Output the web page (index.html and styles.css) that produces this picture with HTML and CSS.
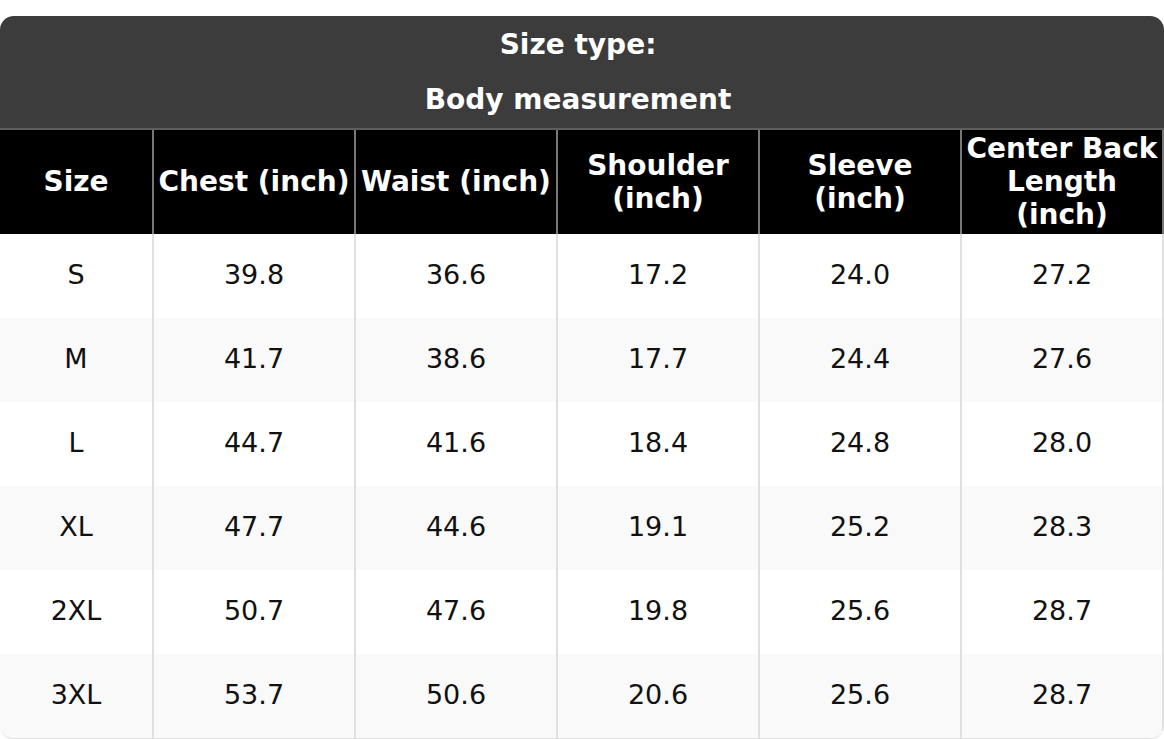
FILE: index.html
```html
<!DOCTYPE html>
<html lang="en">
<head>
<meta charset="utf-8">
<title>Size chart</title>
<link rel="stylesheet" href="styles.css">
</head>
<body>
<div class="chart">
  <table class="size-table">
    <colgroup>
      <col class="col-size">
      <col><col><col><col><col>
    </colgroup>
    <thead>
      <tr>
        <th class="type-head" colspan="6">
          <p class="type-line">Size type:</p>
          <p class="type-line">Body measurement</p>
        </th>
      </tr>
      <tr class="col-head">
        <th>Size</th>
        <th>Chest (inch)</th>
        <th>Waist (inch)</th>
        <th>Shoulder (inch)</th>
        <th>Sleeve (inch)</th>
        <th>Center Back Length (inch)</th>
      </tr>
    </thead>
    <tbody>
      <tr><td>S</td><td>39.8</td><td>36.6</td><td>17.2</td><td>24.0</td><td>27.2</td></tr>
      <tr><td>M</td><td>41.7</td><td>38.6</td><td>17.7</td><td>24.4</td><td>27.6</td></tr>
      <tr><td>L</td><td>44.7</td><td>41.6</td><td>18.4</td><td>24.8</td><td>28.0</td></tr>
      <tr><td>XL</td><td>47.7</td><td>44.6</td><td>19.1</td><td>25.2</td><td>28.3</td></tr>
      <tr><td>2XL</td><td>50.7</td><td>47.6</td><td>19.8</td><td>25.6</td><td>28.7</td></tr>
      <tr><td>3XL</td><td>53.7</td><td>50.6</td><td>20.6</td><td>25.6</td><td>28.7</td></tr>
    </tbody>
  </table>
</div>
</body>
</html>
```

FILE: styles.css
```css
html, body {
  margin: 0;
  padding: 0;
  background: #ffffff;
}

body {
  font-family: "DejaVu Sans", "Liberation Sans", sans-serif;
  font-size: 27px;
  line-height: 33px;
  color: #111111;
}

.chart {
  margin-top: 16px;
  border-radius: 14px;
  overflow: hidden;
  border-bottom: 1px solid #dedede;
  box-shadow: 0 1px 2px rgba(0, 0, 0, 0.06);
}

.size-table {
  width: 100%;
  table-layout: fixed;
  border-collapse: separate;
  border-spacing: 0;
}

.col-size {
  width: 154px;
}

.type-head {
  background: #3c3c3c;
  color: #ffffff;
  font-size: 28px;
  font-weight: bold;
  text-align: center;
  padding: 12px 8px 12px 0;
  border-bottom: 2px solid #5e5e5e;
}

.type-line {
  margin: 0;
}

.type-line + .type-line {
  margin-top: 22px;
}

.col-head th {
  background: #000000;
  color: #ffffff;
  font-size: 28px;
  font-weight: bold;
  text-align: center;
  vertical-align: middle;
  height: 99px;
  padding: 2px 3px 3px;
  border-right: 2px solid #777777;
}

.size-table td {
  text-align: center;
  vertical-align: middle;
  height: 33px;
  padding: 24px 4px 27px;
  border-right: 2px solid #e0e0e0;
}

.size-table tbody tr:nth-child(even) td {
  background: #f9f9f9;
}

.size-table tbody tr:nth-child(odd) td {
  background: #ffffff;
}
```
